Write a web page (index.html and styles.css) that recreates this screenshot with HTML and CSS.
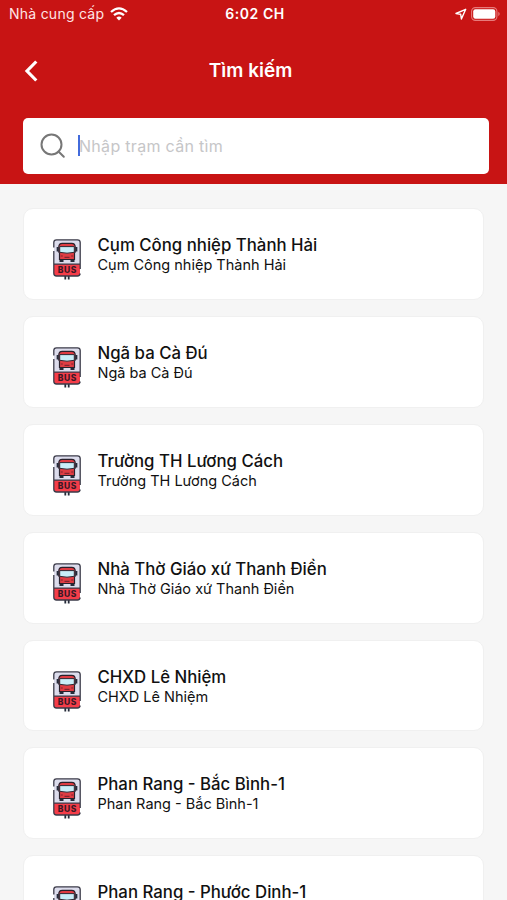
FILE: index.html
```html
<!DOCTYPE html>
<html lang="vi">
<head>
  <meta charset="UTF-8">
  <meta name="viewport" content="width=device-width, initial-scale=1.0">
  <title>Tìm kiếm</title>
  <link rel="stylesheet" href="styles.css">
</head>
<body>
  <!-- Bus stop sign, shared by every row -->
  <svg class="sprite" width="0" height="0">
    <symbol id="busStop" viewBox="0 0 30 42">
      <path d="M13.300 37.500v4M16.700 37.500v4" stroke="#252b3a" stroke-width="1.800"/>
      <path d="M2 26V4.500Q2 2 4.500 2h21Q28 2 28 4.500V26z" fill="#dcdcec"/>
      <path d="M2 26h26v9.500q0 2.500-2.500 2.500h-21Q2 38 2 35.500z" fill="#f53d49"/>
      <path d="M1.800 9.500v-5Q1.800 1.800 4.500 1.800h21q2.700 0 2.700 2.700V31M1.800 13v22.300q0 2.700 2.700 2.700h21q2.200 0 2.700-2.500M2 26.200h26" fill="none" stroke="#3a3a48" stroke-width="1.300"/>
      <path d="M7.500 20h4v4h-4zM18.500 20h4v4h-4z" fill="#252b3a"/>
      <path d="M6.800 9q0-3.700 3.500-3.700h9.400q3.500 0 3.500 3.700v5l-.7 1v6.500h-15V15l-.7-1z" fill="#df3c43" stroke="#29212c" stroke-width="1.200"/>
      <path d="M7.700 8.600h14.600v5.700q-7.300 1.800-14.600 0z" fill="#c9eef9" stroke="#302833" stroke-width="1"/>
      <path d="M5.600 9v4.500M24.400 9v4.500" stroke="#252b3a" stroke-width="1.900"/>
      <path d="M8.800 18h2M19.200 18h2M12.500 19.300h5" stroke="#7d2430" stroke-width="1.200"/>
      <text class="bus-label" x="15.300" y="35.200" text-anchor="middle">BUS</text>
    </symbol>
  </svg>

  <header class="header">
    <div class="status-bar">
      <div class="carrier">
        <span>Nhà cung cấp</span>
        <svg width="18" height="14" viewBox="0 0 18 14" fill="none" stroke="#fff" stroke-width="2.300">
          <path d="M1 5Q9-2.200 17 5M4 8.200q5-4.400 10 0"/>
          <path d="M6.300 10.700q2.700-2.400 5.400 0L9 13.500z" fill="#fff" stroke="none"/>
        </svg>
      </div>
      <div class="time">6:02 CH</div>
      <div class="indicators">
        <svg width="12" height="12" viewBox="0 0 12 12" fill="none" stroke="#fff" stroke-width="1.400" stroke-linejoin="round">
          <path d="M10.700 1.300L1 5.500l4.700.8.700 4.700z"/>
        </svg>
        <svg width="30" height="14" viewBox="0 0 30 14">
          <rect x=".6" y=".6" width="25.300" height="12.800" rx="3.800" fill="none" stroke="#e77b7b" stroke-width="1.100"/>
          <rect x="2.200" y="2.200" width="22.100" height="9.600" rx="2.200" fill="#fff"/>
          <path d="M27.300 4.800q2.800 2.200 0 4.400z" fill="#e77b7b"/>
        </svg>
      </div>
    </div>

    <div class="nav-bar">
      <svg class="back" width="14" height="22" viewBox="0 0 14 22" fill="none" stroke="#fff" stroke-width="3.200">
        <path d="M12.300 1.500L3 11l9.300 9.500"/>
      </svg>
      <h1 class="page-title">Tìm kiếm</h1>
    </div>

    <div class="search-box">
      <svg width="26" height="26" viewBox="0 0 26 26" fill="none" stroke="#777" stroke-width="2">
        <circle cx="11.500" cy="11.500" r="10"/>
        <path d="M18.500 18.500l5.300 5.300" stroke-linecap="round"/>
      </svg>
      <span class="caret"></span>
      <span class="placeholder">Nhập trạm cần tìm</span>
    </div>
  </header>

  <main class="stop-list">
    <div class="stop-card">
      <svg class="stop-icon"><use href="#busStop"/></svg>
      <div class="stop-text">
        <div class="stop-name">Cụm Công nhiệp Thành Hải</div>
        <div class="stop-address">Cụm Công nhiệp Thành Hải</div>
      </div>
    </div>
    <div class="stop-card">
      <svg class="stop-icon"><use href="#busStop"/></svg>
      <div class="stop-text">
        <div class="stop-name">Ngã ba Cà Đú</div>
        <div class="stop-address">Ngã ba Cà Đú</div>
      </div>
    </div>
    <div class="stop-card">
      <svg class="stop-icon"><use href="#busStop"/></svg>
      <div class="stop-text">
        <div class="stop-name">Trường TH Lương Cách</div>
        <div class="stop-address">Trường TH Lương Cách</div>
      </div>
    </div>
    <div class="stop-card">
      <svg class="stop-icon"><use href="#busStop"/></svg>
      <div class="stop-text">
        <div class="stop-name">Nhà Thờ Giáo xứ Thanh Điền</div>
        <div class="stop-address">Nhà Thờ Giáo xứ Thanh Điền</div>
      </div>
    </div>
    <div class="stop-card">
      <svg class="stop-icon"><use href="#busStop"/></svg>
      <div class="stop-text">
        <div class="stop-name">CHXD Lê Nhiệm</div>
        <div class="stop-address">CHXD Lê Nhiệm</div>
      </div>
    </div>
    <div class="stop-card">
      <svg class="stop-icon"><use href="#busStop"/></svg>
      <div class="stop-text">
        <div class="stop-name">Phan Rang - Bắc Bình-1</div>
        <div class="stop-address">Phan Rang - Bắc Bình-1</div>
      </div>
    </div>
    <div class="stop-card">
      <svg class="stop-icon"><use href="#busStop"/></svg>
      <div class="stop-text">
        <div class="stop-name">Phan Rang - Phước Dinh-1</div>
      </div>
    </div>
  </main>
</body>
</html>
```

FILE: styles.css
```css
* {
  box-sizing: border-box;
}

body {
  display: flex;
  flex-direction: column;
  height: 900px;
  margin: 0;
  overflow: hidden;
  background-color: #f6f6f6;
  color: #111;
  font-family: Inter, 'Liberation Sans', sans-serif;
}

svg {
  display: block;
  flex-shrink: 0;
}

.sprite {
  position: absolute;
}

.header {
  height: 184px;
  flex-shrink: 0;
  background-color: #c81414;
  color: #fff;
}

.status-bar {
  display: grid;
  grid-template-columns: 1fr auto 1fr;
  align-items: center;
  height: 27px;
  padding: 0 6px 0 9px;
  font-size: 14px;
}

.carrier {
  display: flex;
  align-items: center;
  gap: 6px;
  color: #ffe5e5;
  letter-spacing: 0.25px;
}

.time {
  font-size: 14px;
  font-weight: 600;
  letter-spacing: 0.55px;
}

.indicators {
  display: flex;
  justify-content: flex-end;
  align-items: center;
  gap: 4px;
}

.nav-bar {
  display: grid;
  grid-template-columns: 1fr auto 1fr;
  align-items: center;
  height: 87px;
  padding: 0 30px 0 24px;
}

.page-title {
  margin: 0;
  font-size: 19px;
  font-weight: 600;
}

.search-box {
  display: flex;
  align-items: center;
  height: 56px;
  margin: 4px 18px 0 23px;
  padding: 0 0 1px 17px;
  background-color: #fff;
  border-radius: 5px;
}

.caret {
  width: 2px;
  height: 21px;
  margin-left: 12px;
  background-color: #426bdc;
}

.placeholder {
  margin-left: -1px;
  color: #c6c6c8;
  font-size: 16px;
  letter-spacing: 0.3px;
}

.stop-list {
  display: flex;
  flex-direction: column;
  gap: 16px;
  padding: 24px 23px 0;
}

.stop-card {
  display: flex;
  flex-shrink: 0;
  height: 91.9px;
  padding: 0 28px;
  background-color: #fff;
  border: 1px solid #f0f0f0;
  border-radius: 10px;
}

.stop-icon {
  width: 30px;
  height: 42px;
  margin-top: 29px;
}

.bus-label {
  fill: #3b1825;
  font-size: 8.5px;
  font-weight: 800;
  letter-spacing: 0.6px;
}

.stop-text {
  margin: 26px 0 0 15.5px;
}

.stop-name {
  font-size: 16.8px;
  font-weight: 500;
  line-height: 21px;
}

.stop-address {
  font-size: 14.5px;
  line-height: 17px;
}
```
